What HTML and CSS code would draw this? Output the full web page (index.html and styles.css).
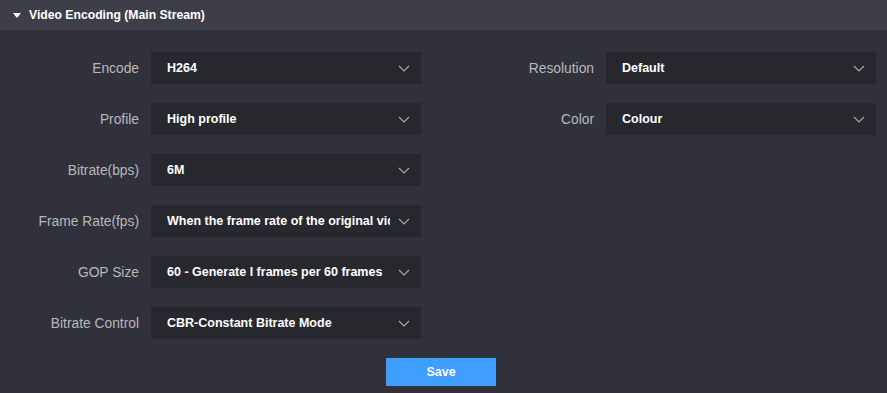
FILE: index.html
```html
<!DOCTYPE html>
<html lang="en">
<head>
    <meta charset="UTF-8">
    <title>Video Encoding</title>
    <link rel="stylesheet" href="styles.css">
</head>
<body>
    <div class="panel">
        <div class="panel-head">
            <span class="caret"></span>
            <span class="panel-title">Video Encoding (Main Stream)</span>
        </div>

        <div class="form">
            <div class="col">
                <div class="row">
                    <label class="label">Encode</label>
                    <div class="select"><span class="value">H264</span><svg class="chev" viewBox="0 0 12 7"><path d="M1 1l5 5 5-5"/></svg></div>
                </div>
                <div class="row">
                    <label class="label">Profile</label>
                    <div class="select"><span class="value">High profile</span><svg class="chev" viewBox="0 0 12 7"><path d="M1 1l5 5 5-5"/></svg></div>
                </div>
                <div class="row">
                    <label class="label">Bitrate(bps)</label>
                    <div class="select"><span class="value">6M</span><svg class="chev" viewBox="0 0 12 7"><path d="M1 1l5 5 5-5"/></svg></div>
                </div>
                <div class="row">
                    <label class="label">Frame Rate(fps)</label>
                    <div class="select"><span class="value">When the frame rate of the original video</span><svg class="chev" viewBox="0 0 12 7"><path d="M1 1l5 5 5-5"/></svg></div>
                </div>
                <div class="row">
                    <label class="label">GOP Size</label>
                    <div class="select"><span class="value">60 - Generate I frames per 60 frames</span><svg class="chev" viewBox="0 0 12 7"><path d="M1 1l5 5 5-5"/></svg></div>
                </div>
                <div class="row">
                    <label class="label">Bitrate Control</label>
                    <div class="select"><span class="value">CBR-Constant Bitrate Mode</span><svg class="chev" viewBox="0 0 12 7"><path d="M1 1l5 5 5-5"/></svg></div>
                </div>
            </div>

            <div class="col">
                <div class="row">
                    <label class="label">Resolution</label>
                    <div class="select"><span class="value">Default</span><svg class="chev" viewBox="0 0 12 7"><path d="M1 1l5 5 5-5"/></svg></div>
                </div>
                <div class="row">
                    <label class="label">Color</label>
                    <div class="select"><span class="value">Colour</span><svg class="chev" viewBox="0 0 12 7"><path d="M1 1l5 5 5-5"/></svg></div>
                </div>
            </div>
        </div>

        <div class="actions">
            <button class="btn-save">Save</button>
        </div>
    </div>
</body>
</html>
```

FILE: styles.css
```css
body {
    margin: 0;
    background-color: #30313a;
    font-family: 'Liberation Sans', Arial, sans-serif;
    font-size: 13px;
    height: 100vh;
    overflow: hidden;
}

.panel-head {
    height: 30px;
    background-color: #3d3e47;
    display: flex;
    align-items: center;
    padding-left: 13px;
}

.caret {
    width: 0;
    height: 0;
    border-left: 4px solid transparent;
    border-right: 4px solid transparent;
    border-top: 5px solid #ffffff;
    margin-right: 8px;
    margin-top: 1px;
}

.panel-title {
    color: #ffffff;
    font-weight: bold;
    font-size: 12.2px;
}

.form {
    display: flex;
    gap: 34px;
    padding-top: 22px;
}

.col {
    display: flex;
    flex-direction: column;
    gap: 19px;
}

.row {
    display: flex;
    align-items: center;
    gap: 12px;
}

.label {
    width: 139px;
    text-align: right;
    color: #b8b8bc;
    font-size: 13.8px;
}

.select {
    width: 270px;
    height: 32px;
    box-sizing: border-box;
    background-color: #27282e;
    display: flex;
    align-items: center;
    padding: 0 11px 0 16px;
}

.value {
    flex: 1;
    color: #ffffff;
    font-weight: bold;
    font-size: 12.5px;
    white-space: nowrap;
    overflow: hidden;
    margin-right: 8px;
}

.chev {
    width: 12px;
    height: 7px;
    fill: none;
    stroke: #a8a8ae;
    stroke-width: 1.2;
}

.actions {
    display: flex;
    justify-content: center;
    padding-top: 19px;
    padding-right: 5px;
}

.btn-save {
    width: 110px;
    height: 28px;
    border: none;
    background-color: #409eff;
    color: #ffffff;
    font-family: 'Liberation Sans', Arial, sans-serif;
    font-size: 12.5px;
    font-weight: bold;
    cursor: pointer;
}
```
